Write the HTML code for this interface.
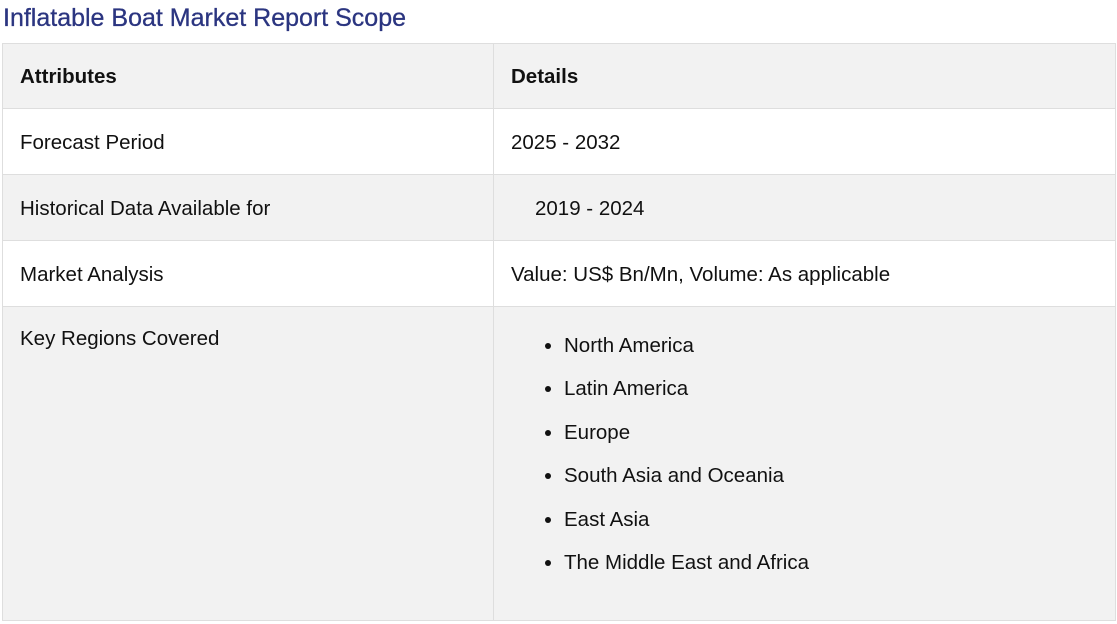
<!DOCTYPE html>
<html><head><meta charset="utf-8"><style>
body{margin:0;background:#fff;font-family:"Liberation Sans",sans-serif;color:#111;overflow:hidden;}
h2{position:absolute;left:3px;top:1px;margin:0;font-size:25px;font-weight:normal;color:#2b3580;line-height:34px;-webkit-text-stroke:0.3px #2b3580;}
table{position:absolute;left:2px;top:43px;width:1114px;border-collapse:collapse;font-size:20.5px;}
td,th{border:1px solid #dedede;padding:2px 17px 0;text-align:left;vertical-align:middle;}
th{font-weight:bold;height:62px;}
td{height:63px;}
tr:nth-child(odd){background:#f2f2f2;}
tr:nth-child(even){background:#fff;}
.c1{width:456px;}
ul{margin:0;padding:0 0 0 53px;}
li{height:43.4px;line-height:43.4px;}
</style></head><body>
<h2>Inflatable Boat Market Report Scope</h2>
<table>
<tr><th class="c1">Attributes</th><th>Details</th></tr>
<tr><td class="c1">Forecast Period</td><td>2025 - 2032</td></tr>
<tr><td class="c1">Historical Data Available for</td><td><span style="padding-left:24px">2019 - 2024</span></td></tr>
<tr><td class="c1">Market Analysis</td><td>Value: US$ Bn/Mn, Volume: As applicable</td></tr>
<tr><td class="c1" style="vertical-align:top;height:293px;padding-top:20px;">Key Regions Covered</td><td style="vertical-align:top;padding-top:17px;">
<ul><li>North America</li><li>Latin America</li><li>Europe</li><li>South Asia and Oceania</li><li>East Asia</li><li>The Middle East and Africa</li></ul></td></tr>
</table>
</body></html>
